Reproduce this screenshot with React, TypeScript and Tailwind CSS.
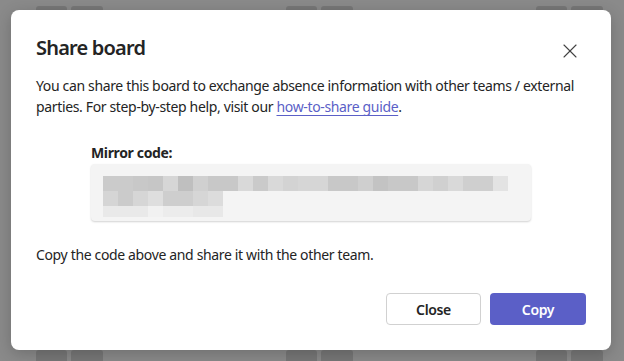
import { X } from 'lucide-react';

const row1 = [
  '#cbcbcb', '#cbcbcb', '#c8c8c8', '#c6c6c6', '#d6d6d6', '#bfbfbf', '#d0d0d0', '#c8c8c8', '#c8c8c8',
  '#d9d9d9', '#cacaca', '#d9d9d9', '#d3d3d3', '#d6d6d6', '#d6d6d6', '#c8c8c8', '#c8c8c8', '#cfcfcf',
  '#c3c3c3', '#c8c8c8', '#c8c8c8', '#d6d6d6', '#d0d0d0', '#d9d9d9', '#cfcfcf', '#cfcfcf', '#e3e3e3',
];
const row2 = ['#d5d5d5', '#cbcbcb', '#d6d6d6', '#dedede', '#cecece', '#cecece', '#d6d6d6', '#dcdcdc'];
const row3 = ['#e9e9e9', '#e9e9e9', '#e9e9e9', '#f1f1f1', '#ececec', '#ececec', '#e8e8e8', '#e8e8e8'];

function BoardRow() {
  return (
    <div className="flex h-full pl-[36px]">
      <div className="flex gap-[4px]">
        <div className="w-[31px] h-full bg-[#777777] rounded-t-[3px]" />
        <div className="w-[32px] h-full bg-[#777777] rounded-t-[3px]" />
      </div>
      <div className="flex gap-[4px] ml-[183px]">
        <div className="w-[31px] h-full bg-[#777777] rounded-t-[3px]" />
        <div className="w-[32px] h-full bg-[#777777] rounded-t-[3px]" />
      </div>
      <div className="flex gap-[4px] ml-[183px]">
        <div className="w-[31px] h-full bg-[#777777] rounded-t-[3px]" />
        <div className="w-[32px] h-full bg-[#777777] rounded-t-[3px]" />
      </div>
    </div>
  );
}

export default function App() {
  return (
    <div
      className="relative w-[624px] h-[361px] overflow-hidden bg-[#8a8a8a] flex flex-col justify-between"
      style={{ fontFamily: '"Noto Sans", "Open Sans", sans-serif' }}
    >
      <div className="h-[10px] pt-[6px]">
        <BoardRow />
      </div>
      <div className="h-[11px]">
        <BoardRow />
      </div>

      {/* Dialog */}
      <div className="absolute left-[11px] top-[10px] w-[600px] h-[340px] bg-white rounded-[8px] shadow-[0_4px_16px_rgba(0,0,0,0.2)] flex flex-col px-[25px] pt-[24px] pb-[25px] text-[#242424] tracking-[-0.35px]">
        <div className="flex items-center justify-between h-[28px]">
          <h2 className="text-[20px] font-semibold leading-[28px] tracking-[-0.8px]">Share board</h2>
          <button className="w-[24px] h-[24px] flex items-center justify-center text-[#424242] mr-[4px] mt-[5px]">
            <X className="w-[24px] h-[24px]" strokeWidth={1.1} />
          </button>
        </div>

        <p className="mt-[13px] text-[14px] leading-[21px]">
          You can share this board to exchange absence information with other teams / external parties. For step-by-step
          help, visit our{' '}
          <a className="text-[#5b5fc7] underline underline-offset-[3px]">how-to-share guide</a>.
        </p>

        <div className="mt-[26px] w-[440px] self-center">
          <div className="text-[14px] font-bold leading-[20px] h-[21px]">Mirror code:</div>
          <div className="h-[57px] bg-[#f4f4f4] rounded-[4px] shadow-[0_1px_2px_rgba(0,0,0,0.18)] pt-[12px] pl-[12px]">
            <div className="flex h-[15px]">
              {row1.map((c, i) => (
                <div key={i} className="w-[15px] h-full" style={{ backgroundColor: c }} />
              ))}
            </div>
            <div className="flex h-[15px]">
              {row2.map((c, i) => (
                <div key={i} className="w-[15px] h-full" style={{ backgroundColor: c }} />
              ))}
            </div>
            <div className="flex h-[11px]">
              {row3.map((c, i) => (
                <div key={i} className="w-[15px] h-full" style={{ backgroundColor: c }} />
              ))}
            </div>
          </div>
        </div>

        <p className="mt-[24px] text-[14px] leading-[20px]">Copy the code above and share it with the other team.</p>

        <div className="mt-auto flex justify-end gap-[9px]">
          <button className="w-[95px] h-[32px] rounded-[4px] border border-[#d1d1d1] bg-white text-[14px] font-semibold text-[#242424]">
            Close
          </button>
          <button className="w-[96px] h-[32px] rounded-[4px] bg-[#5b5fc7] text-[14px] font-semibold text-white">
            Copy
          </button>
        </div>
      </div>
    </div>
  );
}
